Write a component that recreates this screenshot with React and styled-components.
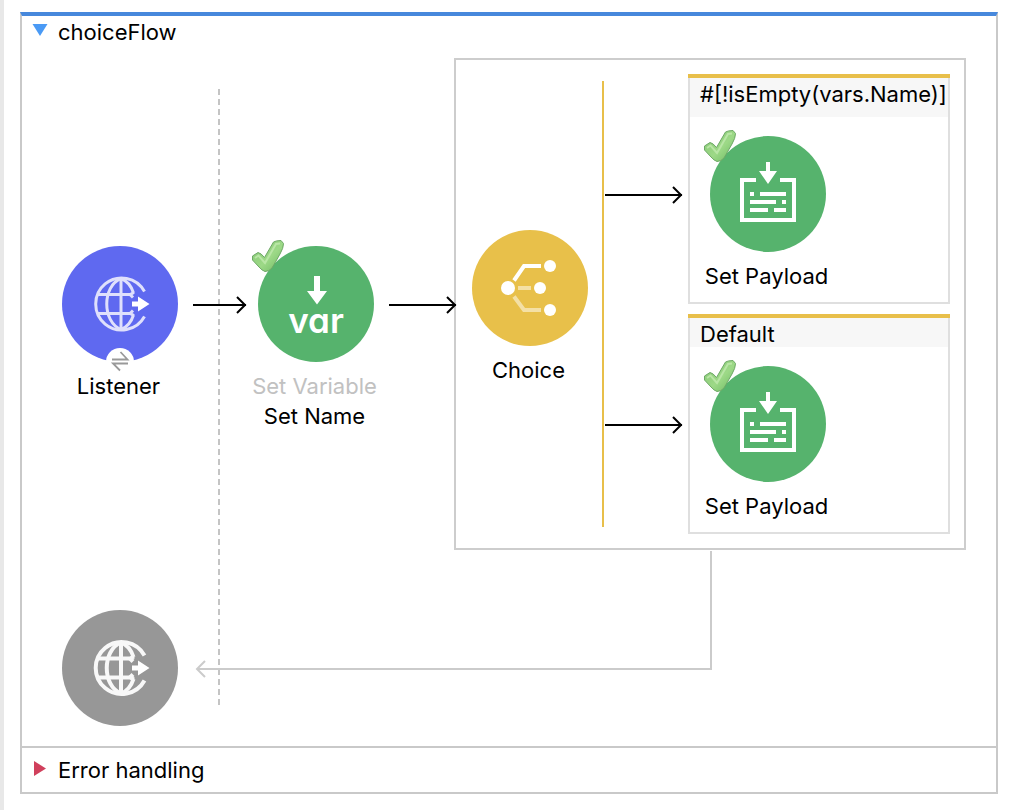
import { useId, useState } from "react";
import styled, { createGlobalStyle } from "styled-components";

const GlobalStyle = createGlobalStyle`
  * {
    box-sizing: border-box;
  }

  body {
    margin: 0;
    background: #fff;
    color: #000;
    font-family: Inter, "Liberation Sans", sans-serif;
    font-size: 22px;
  }
`;

const Page = styled.main`
  min-height: 100vh;
  padding: 12px 24px 16px 16px;
  border-left: 4px solid #e8e8e8;
`;

// flow frame
const Flow = styled.section`
  border: 2px solid #c9c9c9;
  border-top: 4px solid #4788dc;
`;

const SectionToggle = styled.button`
  display: flex;
  align-items: center;
  gap: 10px;
  width: 100%;
  height: ${({ $height }) => $height}px;
  padding: 0 10px;
  border: 0;
  background: none;
  color: inherit;
  font: inherit;
  text-align: left;
  cursor: pointer;

  svg {
    display: block;
    flex: none;
  }
`;

const ErrorSection = styled.div`
  border-top: 2px solid #c9c9c9;
`;

const Canvas = styled.div`
  position: relative;
  padding: 10px 30px 20px 40px;
`;

const SourceBoundary = styled.div`
  position: absolute;
  top: 41px;
  bottom: 40px;
  left: 196px;
  width: 2px;
  background: repeating-linear-gradient(#c4c4c4 0 6px, transparent 6px 10px);
`;

const MainRow = styled.div`
  position: relative;
  display: flex;
  align-items: flex-start;
`;

const ReturnRow = styled.div`
  position: relative;
  display: flex;
  align-items: flex-start;
`;

// nodes
const NodeBox = styled.div`
  display: flex;
  flex: none;
  flex-direction: column;
  align-items: center;
  width: 116px;
  margin-top: ${({ $top }) => $top || 0}px;
`;

const Circle = styled.div`
  position: relative;
  width: 116px;
  height: 116px;
  margin-bottom: ${({ $bare }) => ($bare ? 0 : 9)}px;
  border-radius: 50%;
  background: ${({ $color }) => $color};

  > svg {
    display: block;
  }
`;

const NodeLabel = styled.span`
  padding-right: 3px;
  color: ${({ $muted }) => ($muted ? "#c1c1c1" : "#000")};
  line-height: 30px;
  white-space: nowrap;
`;

const CheckBadge = styled.svg`
  position: absolute;
  top: -6px;
  left: -6px;
`;

const ExchangeBadge = styled.svg`
  position: absolute;
  bottom: -14px;
  left: 44px;
`;

const VarText = styled.text`
  fill: #fff;
  font-size: 35px;
  font-weight: 600;
  font-feature-settings: "cv11";
  text-anchor: middle;
`;

// connectors
const ArrowLine = styled.svg`
  position: relative;
  z-index: 1;
  display: block;
  flex: none;
  margin: ${({ $margin }) => $margin};
`;

const ReturnLine = styled.svg`
  display: block;
  flex: none;
  margin-left: 16px;
`;

// choice scope
const ChoiceBox = styled.div`
  display: flex;
  align-items: flex-start;
  padding: 14px 14px 14px 16px;
  border: 2px solid #cdcdcd;
`;

const RouteBar = styled.div`
  align-self: stretch;
  width: 2px;
  margin: 7px 0 7px 14px;
  background: #e8bf4a;
`;

const Routes = styled.div`
  display: flex;
  flex-direction: column;
  gap: 10px;
`;

const Lane = styled.div`
  display: flex;
  align-items: flex-start;
`;

const RouteCard = styled.div`
  width: 262px;
  border-top: 4px solid #e8bf4a;
`;

const RouteContent = styled.div`
  border: 2px solid #dfdfdf;
  border-top: 0;
`;

const RouteHeader = styled.div`
  padding: 3px 0 ${({ $tall }) => ($tall ? 10 : 0)}px 10px;
  background: #f7f7f7;
  line-height: 26px;
  white-space: nowrap;
`;

const RouteBody = styled.div`
  padding: 19px 20px 11px;
`;

function Arrow({ length, margin }) {
  return (
    <ArrowLine width={length} height="18" $margin={margin} aria-hidden="true">
      <g fill="none" stroke="#000" strokeWidth="2">
        <path d={`M0 9H${length - 1}`} />
        <path d={`M${length - 10} 1L${length - 2} 9L${length - 10} 17`} />
      </g>
    </ArrowLine>
  );
}

function Check() {
  const id = useId();

  return (
    <CheckBadge width="32" height="32" viewBox="0 0 32 32" aria-hidden="true">
      <defs>
        <linearGradient id={id} x1="0" y1="0" x2="1" y2="1">
          <stop offset="0" stopColor="#84c574" />
          <stop offset="0.55" stopColor="#9dd987" />
          <stop offset="1" stopColor="#6cb862" />
        </linearGradient>
      </defs>
      <path
        d="M0.500 16L6 12.500Q9 13 12.500 17.500L21.500 2Q24 0.500 29 0.500L31.500 3.500Q31.500 8 28 14L20 28Q17 31.500 13 31.500Q10 30.500 7 27L0.500 20Z"
        fill={`url(#${id})`}
        stroke="#6da866"
        strokeWidth="1"
        strokeLinejoin="round"
      />
      <path
        d="M3 18L6.500 15.500L13 23L24 4L28 3.500"
        fill="none"
        stroke="#b9e6a6"
        strokeWidth="2"
      />
    </CheckBadge>
  );
}

function GlobeIcon({ color, weight = 3 }) {
  return (
    <svg width="116" height="116" viewBox="0 0 116 116" aria-hidden="true">
      <g fill="none" stroke={color} strokeWidth={weight}>
        <path d="M82.500 45.500A26 26 0 1 0 82.500 70.500" />
        <path d="M59 32V84" />
        <path d="M59 32.500C40 40 40 76 59 83.500" />
        <path d="M59 32.500Q68 36 71.500 47" />
        <path d="M59 83.500Q68 80 71.500 69" />
        <path d="M35.500 48.500H68L72 46.500" />
        <path d="M35.500 67.500H68L72 69.500" />
        <path d="M68 48.500L71 51.500" />
        <path d="M68 67.500L71 64.500" />
      </g>
      <path d="M70 55.500H76V50.500L87.500 58L76 65.500V60.500H70Z" fill="#fff" />
    </svg>
  );
}

function VariableIcon() {
  return (
    <svg width="116" height="116" viewBox="0 0 116 116" aria-hidden="true">
      <path d="M56 30H62V45H69L59 58.500L49 45H56Z" fill="#fff" />
      <VarText x="58" y="87">
        var
      </VarText>
    </svg>
  );
}

function ChoiceIcon() {
  return (
    <svg width="116" height="116" viewBox="0 0 116 116" aria-hidden="true">
      <g fill="none" stroke="#fff" strokeWidth="4">
        <path d="M42 50.500L52 36H69" />
        <path d="M46 58H59" opacity="0.500" />
        <path d="M42 66.500L52 80H69" opacity="0.500" />
      </g>
      <g fill="#fff">
        <circle cx="36" cy="58" r="7" />
        <circle cx="78" cy="36" r="6" />
        <circle cx="68" cy="58" r="6" />
        <circle cx="78" cy="80" r="6" />
      </g>
    </svg>
  );
}

function PayloadIcon() {
  return (
    <svg width="116" height="116" viewBox="0 0 116 116" aria-hidden="true">
      <path d="M56 26H60V35H67L58 48L49 35H56Z" fill="#fff" />
      <g fill="none" stroke="#fff" strokeWidth="4">
        <path d="M46 44H32V84H84V44H70" />
        <path d="M40 58H44M50 58H76" />
        <path d="M40 66H66M72 66H76" />
        <path d="M40 74H58M64 74H76" />
      </g>
    </svg>
  );
}

function Exchange() {
  return (
    <ExchangeBadge width="28" height="28" viewBox="0 0 28 28" aria-hidden="true">
      <circle cx="14" cy="14" r="14" fill="#fff" />
      <g fill="none" stroke="#999" strokeWidth="1.800">
        <path d="M6 11.500H21.500L14.500 4" />
        <path d="M22 15.500H7L14 22.500" />
      </g>
    </ExchangeBadge>
  );
}

function Node({ icon, color, type, name, top, checked, exchange }) {
  return (
    <NodeBox $top={top}>
      <Circle $color={color} $bare={!name}>
        {icon}
        {checked && <Check />}
        {exchange && <Exchange />}
      </Circle>
      {type && <NodeLabel $muted>{type}</NodeLabel>}
      {name && <NodeLabel>{name}</NodeLabel>}
    </NodeBox>
  );
}

function Route({ condition, tall }) {
  return (
    <Lane>
      <Arrow length={78} margin={tall ? "112px 5px 0 1px" : "102px 5px 0 1px"} />
      <RouteCard>
        <RouteContent>
          <RouteHeader $tall={tall}>{condition}</RouteHeader>
          <RouteBody>
            <Node icon={<PayloadIcon />} color="#56b36d" name="Set Payload" checked />
          </RouteBody>
        </RouteContent>
      </RouteCard>
    </Lane>
  );
}

function App() {
  const [open, setOpen] = useState(true);
  const [errorOpen, setErrorOpen] = useState(false);

  return (
    <>
      <GlobalStyle />
      <Page>
        <Flow>
          <SectionToggle
            type="button"
            $height={32}
            aria-expanded={open}
            onClick={() => setOpen(!open)}
          >
            <svg width="16" height="18" viewBox="0 0 16 18" aria-hidden="true">
              <path d={open ? "M0.500 1H15.500L8 13Z" : "M2 1L14 8L2 15Z"} fill="#4a9af5" />
            </svg>
            choiceFlow
          </SectionToggle>

          {open && (
            <Canvas>
              <SourceBoundary />
              <MainRow>
                <Node
                  icon={<GlobeIcon color="#dfe0fc" />}
                  color="#5f69f0"
                  name="Listener"
                  top={188}
                  exchange
                />
                <Arrow length={54} margin="238px 11px 0 15px" />
                <Node
                  icon={<VariableIcon />}
                  color="#56b36d"
                  type="Set Variable"
                  name="Set Name"
                  top={188}
                  checked
                />
                <Arrow length={68} margin="238px -3px 0 15px" />
                <ChoiceBox>
                  <Node icon={<ChoiceIcon />} color="#e8c04a" name="Choice" top={156} />
                  <RouteBar />
                  <Routes>
                    <Route condition="#[!isEmpty(vars.Name)]" tall />
                    <Route condition="Default" />
                  </Routes>
                </ChoiceBox>
              </MainRow>

              {/* response back to the source */}
              <ReturnRow>
                <Node
                  icon={<GlobeIcon color="#f8f8f8" weight={4} />}
                  color="#979797"
                  top={60}
                />
                <ReturnLine width="518" height="130" aria-hidden="true">
                  <g fill="none" stroke="#cbcbcb" strokeWidth="2">
                    <path d="M517 1V119H3" />
                    <path d="M11 111L3 119L11 127" />
                  </g>
                </ReturnLine>
              </ReturnRow>
            </Canvas>
          )}

          <ErrorSection>
            <SectionToggle
              type="button"
              $height={44}
              aria-expanded={errorOpen}
              onClick={() => setErrorOpen(!errorOpen)}
            >
              <svg width="16" height="18" viewBox="0 0 16 18" aria-hidden="true">
                <path d={errorOpen ? "M0 1H16L8 13Z" : "M2 0L14 7.500L2 15Z"} fill="#d0405c" />
              </svg>
              Error handling
            </SectionToggle>
          </ErrorSection>
        </Flow>
      </Page>
    </>
  );
}

export default App;
